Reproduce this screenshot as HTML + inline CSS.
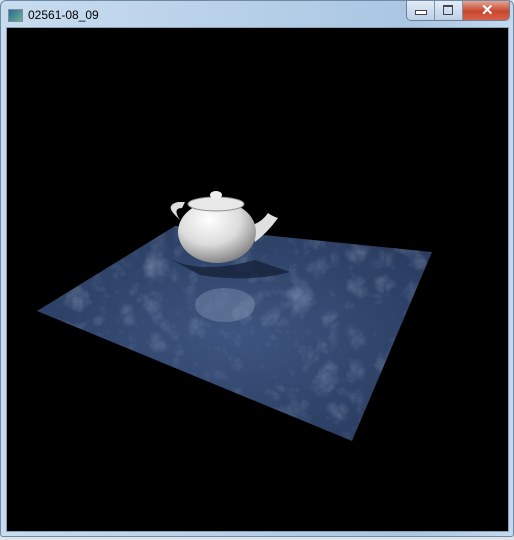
<!DOCTYPE html>
<html><head><style>
body{margin:0;width:514px;height:540px;overflow:hidden;background:#dfe3e8;font-family:"Liberation Sans",sans-serif}
.win{position:absolute;left:0;top:0;width:512px;height:535px;background:linear-gradient(90deg,#c8dcef,#b6cfe8 50%,#a9c6e3 80%,#c4d9ee);border:1px solid #6f8aa5;border-radius:6px 6px 3px 3px}
.title{position:absolute;left:27px;top:7px;font-size:12px;color:#000}
.ico{position:absolute;left:7px;top:8px;width:13px;height:11px;background:linear-gradient(135deg,#2a6a9a,#6cb08c);border:1px solid #7e8ea0}
.btns{position:absolute;left:405px;top:0;width:102px;height:19px;border:1px solid #6b7f96;border-top:none;border-radius:0 0 5px 5px;overflow:hidden;display:flex}
.b{width:27px;height:19px;background:linear-gradient(#e2ecf6,#bcd0e6);border-right:1px solid #7e93aa;position:relative}
.x{flex:1;background:linear-gradient(#e4a493,#c8462d 55%,#d6634a);position:relative}
.client{position:absolute;left:6px;top:27px;width:501px;height:503px;background:#000;border:1px solid #8aa0b8}
</style></head><body>
<div class="win">
<div class="ico"></div><div class="title">02561-08_09</div>
<div class="btns"><div class="b"><div style="position:absolute;left:8px;top:9px;width:10px;height:3px;border:1px solid #445;background:#fff"></div></div><div class="b"><div style="position:absolute;left:8px;top:4px;width:8px;height:7px;border:1px solid #445;border-top-width:2px"></div></div><div class="x"><div style="position:absolute;left:18px;top:0;color:#fff;font-weight:bold;font-size:15px">✕</div></div></div>
</div>
<div class="client"></div>
<svg width="514" height="540" style="position:absolute;left:0;top:0">
<defs>
<radialGradient id="pl" cx="0.5" cy="0.5" r="0.7"><stop offset="0" stop-color="#3d557f"/><stop offset="1" stop-color="#26375a"/></radialGradient>
<radialGradient id="tp" cx="0.4" cy="0.3" r="0.8"><stop offset="0" stop-color="#ffffff"/><stop offset="0.5" stop-color="#dcdcdc"/><stop offset="1" stop-color="#6c6c6c"/></radialGradient>
<filter id="n"><feTurbulence baseFrequency="0.035" numOctaves="4" seed="5"/><feColorMatrix values="0 0 0 0 0.6 0 0 0 0 0.7 0 0 0 0 0.9 0 0 0 0.7 -0.2"/></filter>
<clipPath id="c"><polygon points="37,311 175,226 432,252 352,441"/></clipPath>
</defs>
<polygon points="37,311 175,226 432,252 352,441" fill="url(#pl)"/>
<rect x="30" y="220" width="410" height="230" filter="url(#n)" clip-path="url(#c)" opacity="0.7"/>
<path d="M168,258 Q200,275 255,260 L290,272 Q250,283 200,275 Z" fill="#16223a" opacity="0.8"/>
<ellipse cx="225" cy="305" rx="30" ry="17" fill="#8a9ab8" opacity="0.4"/>
<path d="M175,215 Q165,205 178,202 L185,202 L182,208 Q172,208 180,220 Z" fill="#ddd"/>
<path d="M252,225 Q262,222 268,213 Q272,216 278,218 Q268,232 255,242 Z" fill="#e0e0e0"/>
<ellipse cx="217" cy="232" rx="39" ry="31" fill="url(#tp)"/>
<ellipse cx="216" cy="204" rx="28" ry="7" fill="#e8e8e8" stroke="#888" stroke-width="1"/>
<ellipse cx="216" cy="195" rx="6" ry="4" fill="#eee"/>
</svg>
</body></html>
